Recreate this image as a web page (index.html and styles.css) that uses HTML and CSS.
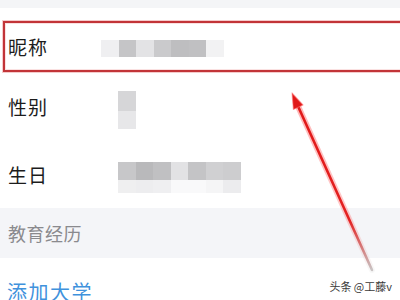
FILE: index.html
```html
<!DOCTYPE html>
<html lang="zh">
<head>
<meta charset="utf-8">
<link rel="stylesheet" href="styles.css">
</head>
<body>
<div class="page">
  <div class="topbar"></div>
  <div class="nick">
    <span class="label nick-label">昵称</span>
    <div class="mosaic m1">
      <span class="s-f0"></span><span class="s-c6"></span><span class="s-e4"></span><span class="s-cb"></span><span class="s-bf"></span><span class="s-c0"></span><span class="s-f1"></span>
    </div>
  </div>
  <div class="row">
    <span class="label">性别</span>
    <div class="mosaic m2">
      <span class="s-d4"></span><span class="s-e6"></span>
    </div>
  </div>
  <div class="row">
    <span class="label">生日</span>
    <div class="mosaic m3">
      <span class="s-c7"></span><span class="s-b9"></span><span class="s-c0"></span><span class="s-e2"></span><span class="s-c3"></span><span class="s-cf"></span><span class="s-cd"></span>
      <span class="s-ef"></span><span class="s-ee"></span><span class="s-f0"></span><span class="s-fa"></span><span class="s-fa"></span><span class="s-f6"></span><span class="s-ec"></span>
    </div>
  </div>
  <div class="section"><span class="section-label">教育经历</span></div>
  <div class="add"><span class="add-label">添加大学</span></div>

  <svg class="arrow" width="400" height="300" viewBox="0 0 400 300">
    <defs>
      <linearGradient id="shaft" gradientUnits="userSpaceOnUse" x1="292" y1="93" x2="372" y2="270">
        <stop offset="0" stop-color="#e01818"/>
        <stop offset="0.72" stop-color="#e42222"/>
        <stop offset="1" stop-color="#c9c4c4"/>
      </linearGradient>
      <linearGradient id="glow" gradientUnits="userSpaceOnUse" x1="292" y1="93" x2="372" y2="270">
        <stop offset="0" stop-color="#ff5a5a" stop-opacity="0.45"/>
        <stop offset="0.7" stop-color="#ff6a6a" stop-opacity="0.35"/>
        <stop offset="1" stop-color="#dddddd" stop-opacity="0.2"/>
      </linearGradient>
    </defs>
    <line x1="297" y1="104" x2="372" y2="270" stroke="url(#glow)" stroke-width="6" stroke-linecap="round"/>
    <line x1="297" y1="104" x2="372" y2="270" stroke="url(#shaft)" stroke-width="2.6" stroke-linecap="round"/>
    <polygon points="292,93 293.4,109.5 303,105" fill="#e01818" stroke="#ff7070" stroke-opacity="0.5" stroke-width="1.2" stroke-linejoin="round"/>
  </svg>
  <div class="watermark">头条 @工藤v</div>
</div>
</body>
</html>
```
FILE: styles.css
```css
html, body {
  margin: 0;
  padding: 0;
  background: #ffffff;
}
.page {
  position: relative;
  width: 400px;
  height: 300px;
  overflow: hidden;
  font-family: "Noto Sans CJK SC", "Noto Sans", sans-serif;
  background: #ffffff;
}
.topbar {
  height: 8px;
  background: #f4f5f7;
}
.nick {
  box-sizing: border-box;
  height: 51px;
  margin: 13px -8px 0 3px;
  border: 2px solid #c23438;
  box-shadow: 0 0 0 1px rgba(232, 140, 140, 0.45), inset 0 0 0 1px rgba(240, 170, 170, 0.35);
  display: flex;
  align-items: center;
}
.label {
  box-sizing: border-box;
  width: 118px;
  padding-left: 8px;
  font-size: 19px;
  letter-spacing: 1px;
  color: #1c1c1c;
  flex-shrink: 0;
}
.nick-label {
  width: 96px;
  padding-left: 3px;
}
.row {
  height: 68px;
  display: flex;
  align-items: center;
}
.mosaic {
  display: grid;
  filter: blur(0.4px);
}
.mosaic span {
  display: block;
}
.m1 {
  grid-template-columns: repeat(7, 17.5px);
  grid-template-rows: 17px;
  margin-top: 3px;
}
.m2 {
  grid-template-columns: 18px;
  grid-template-rows: 20px 18px;
  margin-top: 8px;
}
.m3 {
  grid-template-columns: repeat(7, 17.5px);
  grid-template-rows: 18px 13px;
  margin-top: 7px;
}
.s-f0 { background: #efeff1; }
.s-f1 { background: #f2f2f3; }
.s-c6 { background: #c5c5c7; }
.s-e4 { background: #e3e3e5; }
.s-cb { background: #cacacc; }
.s-bf { background: #bebec0; }
.s-c0 { background: #c0c0c2; }
.s-d4 { background: #d6d6d8; }
.s-e6 { background: #e7e7e9; }
.s-c7 { background: #c7c7c9; }
.s-b9 { background: #b9b9bb; }
.s-e2 { background: #e2e2e4; }
.s-c3 { background: #c4c4c6; }
.s-cf { background: #d0d0d2; }
.s-cd { background: #cdcdcf; }
.s-ef { background: #efeff0; }
.s-ee { background: #ededef; }
.s-fa { background: #f9f9fa; }
.s-f6 { background: #f5f5f6; }
.s-ec { background: #ececee; }
.section {
  height: 50px;
  background: #f4f5f8;
  display: flex;
  align-items: center;
  padding-left: 8px;
}
.section-label {
  font-size: 18px;
  letter-spacing: 0.5px;
  color: #8a8a8e;
}
.add {
  height: 66px;
  display: flex;
  align-items: center;
  padding-left: 7px;
}
.add-label {
  font-size: 20px;
  letter-spacing: 1.5px;
  color: #3f92dc;
}
.arrow {
  position: absolute;
  left: 0;
  top: 0;
  pointer-events: none;
}
.watermark {
  position: absolute;
  right: 8px;
  top: 279px;
  font-size: 11px;
  line-height: 14px;
  color: #3a3a3a;
  text-shadow: 0 0 2px #ffffff;
}
```
